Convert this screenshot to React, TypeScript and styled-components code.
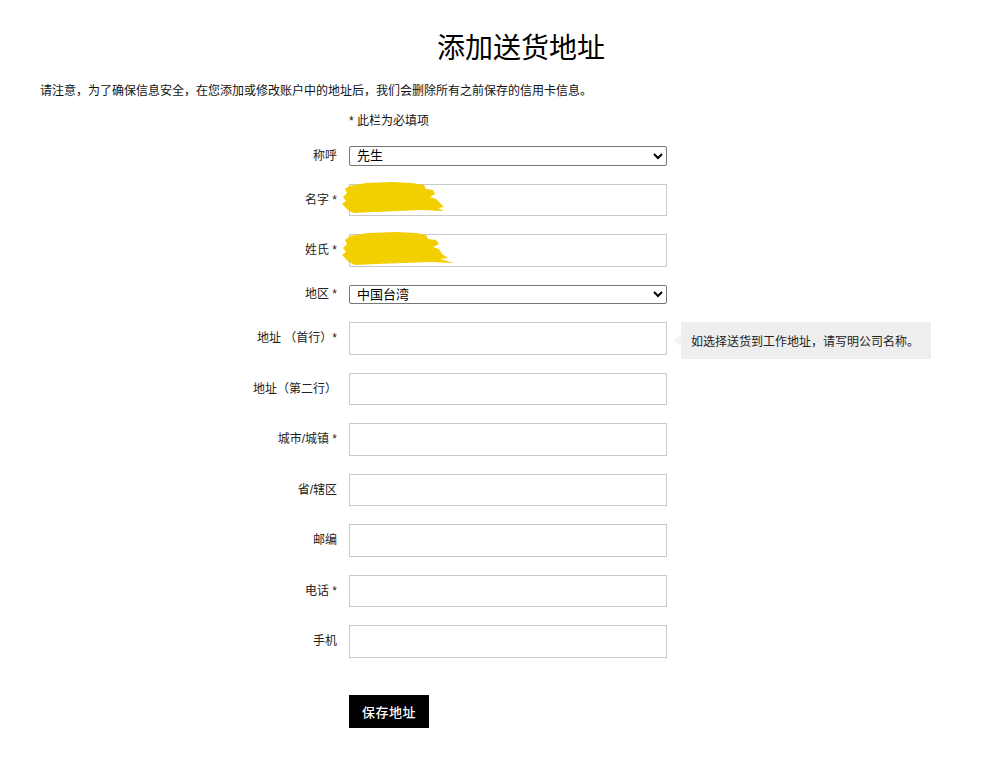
import styled, { createGlobalStyle } from 'styled-components';

const GlobalStyle = createGlobalStyle`
  body {
    margin: 0;
    background: #fff;
    color: #111;
    font-family: 'Liberation Sans', 'Noto Sans CJK SC', sans-serif;
  }
`;

const Page = styled.div`
  width: 983px;
  padding-top: 29px;
`;

const Title = styled.h1`
  margin: 0;
  padding-left: 59px;
  text-align: center;
  font-family: 'Liberation Serif', 'Noto Sans CJK SC', serif;
  font-weight: 400;
  font-size: 28px;
  line-height: 40px;
  color: #000;
`;

const Notice = styled.p`
  margin: 13px 0 0 40px;
  font-size: 12px;
  line-height: 18px;
`;

const RequiredNote = styled.p`
  margin: 12px 0 0 349px;
  font-size: 12px;
  line-height: 18px;
`;

const Form = styled.form`
  display: grid;
  grid-template-columns: 337px 318px;
  column-gap: 12px;
  row-gap: 18px;
  align-items: center;
  margin-top: 16px;
`;

const Label = styled.label`
  text-align: right;
  font-size: 12px;
  line-height: 16px;
  color: #222;
  white-space: pre;
`;

const Field = styled.div`
  position: relative;
  display: flex;
`;

const Select = styled.select`
  width: 100%;
  height: 19.5px;
  box-sizing: border-box;
  margin: 0;
  padding: 0 3px;
  border: 1px solid #767676;
  border-radius: 2px;
  background: #fff;
  font-family: 'Liberation Sans', 'Noto Sans CJK SC', sans-serif;
  font-size: 13px;
  line-height: 15px;
  color: #000;
`;

const Input = styled.input`
  width: 100%;
  height: 32.5px;
  box-sizing: border-box;
  margin: 0;
  padding: 0 8px;
  border: 1px solid #c9c9c9;
  border-radius: 0;
  background: #fff;
  font-size: 13px;
`;

const Scribble = styled.svg`
  position: absolute;
  left: -9px;
  top: -4px;
  pointer-events: none;
`;

const Tip = styled.div`
  position: absolute;
  left: calc(100% + 14px);
  top: 0;
  width: 250px;
  height: 37px;
  box-sizing: border-box;
  padding: 0 10px;
  display: flex;
  align-items: center;
  background: #eeeeee;
  font-size: 12px;
  color: #222;
  white-space: nowrap;

  &::before {
    content: '';
    position: absolute;
    left: -7px;
    top: 13px;
    border-top: 6px solid transparent;
    border-bottom: 6px solid transparent;
    border-right: 7px solid #f4f4f4;
  }
`;

const Actions = styled.div`
  grid-column: 2;
  margin-top: 19px;
`;

const SaveButton = styled.button`
  width: 80px;
  height: 33px;
  border: 0;
  border-radius: 0;
  background: #000;
  color: #fff;
  font-family: 'Noto Sans CJK SC', sans-serif;
  font-size: 13px;
  font-weight: 500;
  letter-spacing: 0.5px;
  cursor: pointer;
`;

const YELLOW = '#f2cf00';

const ScribbleA = () => (
  <Scribble width='112' height='36' viewBox='0 0 112 36'>
    <path
      fill={YELLOW}
      d='M9 6 L26 3 L52 2 L72 3 L84 5 L86 9 L93 10 L95 14 L90 17 L96 19 L100 23 L104 27 L98 28 L104 31 L80 30 L58 31 L34 32 L14 33 L9 31 L5 27 L2 24 L6 21 L3 17 L7 13 L5 9 Z'
    />
  </Scribble>
);

const ScribbleB = () => (
  <Scribble width='118' height='38' viewBox='0 0 118 38'>
    <path
      fill={YELLOW}
      d='M10 6 L28 3 L56 2 L76 3 L86 5 L88 9 L96 10 L99 14 L93 17 L99 19 L102 24 L108 28 L100 29 L114 33 L90 32 L62 33 L36 34 L15 35 L9 32 L5 28 L2 25 L6 22 L3 18 L7 14 L5 10 Z'
    />
  </Scribble>
);

const App = () => {
  return (
    <Page>
      <GlobalStyle />
      <Title>添加送货地址</Title>
      <Notice>
        请注意，为了确保信息安全，在您添加或修改账户中的地址后，我们会删除所有之前保存的信用卡信息。
      </Notice>
      <RequiredNote>* 此栏为必填项</RequiredNote>
      <Form onSubmit={e => e.preventDefault()}>
        <Label>称呼</Label>
        <Field>
          <Select defaultValue='mr'>
            <option value='mr'>先生</option>
            <option value='ms'>女士</option>
          </Select>
        </Field>

        <Label>名字 *</Label>
        <Field>
          <Input />
          <ScribbleA />
        </Field>

        <Label>姓氏 *</Label>
        <Field>
          <Input />
          <ScribbleB />
        </Field>

        <Label>地区 *</Label>
        <Field>
          <Select defaultValue='tw'>
            <option value='tw'>中国台湾</option>
          </Select>
        </Field>

        <Label>地址 （首行）*</Label>
        <Field>
          <Input />
          <Tip>如选择送货到工作地址，请写明公司名称。</Tip>
        </Field>

        <Label>地址（第二行）</Label>
        <Field>
          <Input />
        </Field>

        <Label>城市/城镇 *</Label>
        <Field>
          <Input />
        </Field>

        <Label>省/辖区</Label>
        <Field>
          <Input />
        </Field>

        <Label>邮编</Label>
        <Field>
          <Input />
        </Field>

        <Label>电话 *</Label>
        <Field>
          <Input />
        </Field>

        <Label>手机</Label>
        <Field>
          <Input />
        </Field>

        <Actions>
          <SaveButton type='submit'>保存地址</SaveButton>
        </Actions>
      </Form>
    </Page>
  );
};

export default App;
